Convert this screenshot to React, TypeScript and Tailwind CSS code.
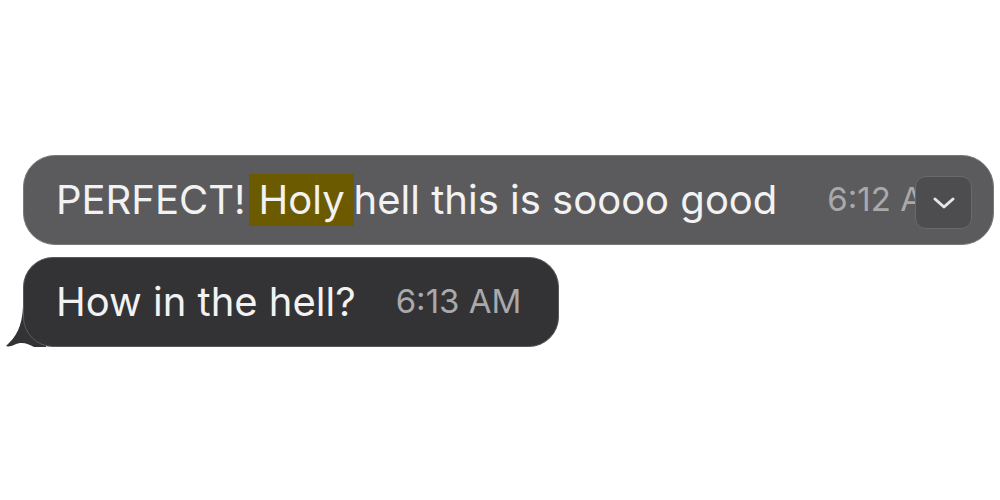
export default function App() {
  return (
    <div className="w-[1000px] h-[500px] bg-white pt-[155px] flex flex-col gap-[12px]" style={{ fontFamily: 'Inter, "Liberation Sans", sans-serif' }}>
      <div className="relative ml-[23px] w-[971px] h-[90px] rounded-[32px] bg-[#5b5b5d] border border-[#7a7a7c] flex items-center pl-[32px] overflow-hidden">
        <span className="text-[40px] text-[#f2f2f2] whitespace-nowrap leading-[52px]">
          PERFECT!<span className="bg-[#6b5a00] inline-block ml-[3px] pl-[10px] pr-[9px]">Holy</span>hell this is soooo good
        </span>
        <span className="ml-[50px] text-[33px] text-[#a9a9ab] whitespace-nowrap">6:12 AM</span>
        <div className="absolute left-[891px] top-[20px] w-[57px] h-[53px] rounded-[11px] bg-[#4d4d4f] border border-[#69696b] flex items-center justify-center">
          <svg width="22" height="12" viewBox="0 0 22 12" fill="none">
            <path d="M2 2l9 8 9-8" stroke="#e6e6e6" strokeWidth="3" strokeLinecap="round" strokeLinejoin="round" />
          </svg>
        </div>
      </div>
      <div className="relative ml-[23px] w-[536px] h-[90px]">
        <svg className="absolute left-[-17px] bottom-[0px]" width="50" height="40" viewBox="0 0 50 40">
          <path d="M17 0 L40 0 L40 40 L28 40 C22 37 16 34 8 38 C6 39 2 40 0 39 C10 30 16 20 17 0 Z" fill="#333335" />
        </svg>
        <div className="relative w-full h-full rounded-[30px] bg-[#333335] border border-[#5a5a5c] flex items-center pl-[32px]">
          <span className="text-[40px] text-[#f2f2f2] whitespace-nowrap">How in the hell?</span>
          <span className="ml-[40px] text-[33px] text-[#a9a9ab] whitespace-nowrap">6:13 AM</span>
        </div>
      </div>
    </div>
  )
}
